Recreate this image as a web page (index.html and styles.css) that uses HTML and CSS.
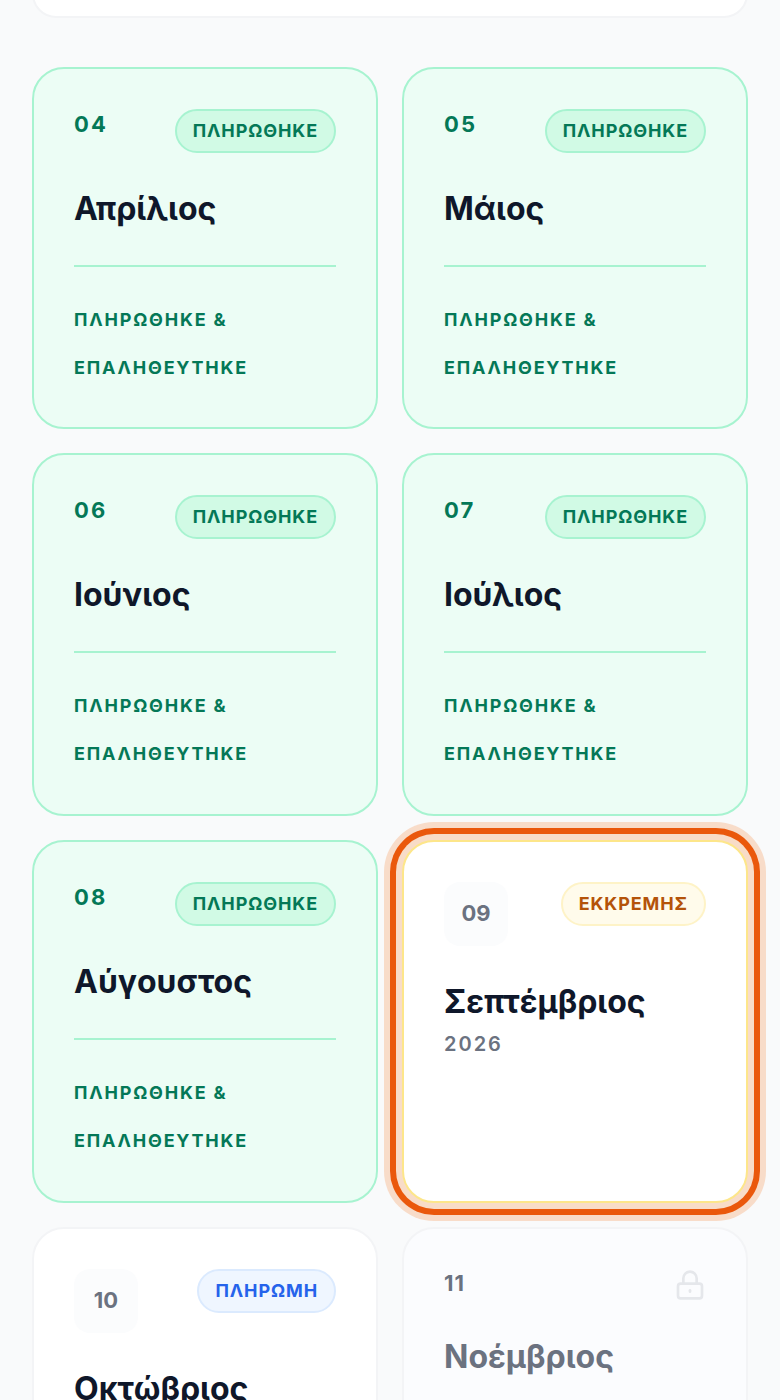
FILE: index.html
```html
<!DOCTYPE html>
<html lang="el">
<head>
<meta charset="utf-8">
<title>Πληρωμές</title>
<link rel="stylesheet" href="styles.css">
</head>
<body>
<div class="summary"></div>
<main class="grid">
  <article class="card paid">
    <div class="head"><span class="num">04</span><span class="badge b-paid">ΠΛΗΡΩΘΗΚΕ</span></div>
    <h2 class="title">Απρίλιος</h2>
    <p class="note">ΠΛΗΡΩΘΗΚΕ &amp; ΕΠΑΛΗΘΕΥΤΗΚΕ</p>
  </article>
  <article class="card paid">
    <div class="head"><span class="num">05</span><span class="badge b-paid">ΠΛΗΡΩΘΗΚΕ</span></div>
    <h2 class="title">Μάιος</h2>
    <p class="note">ΠΛΗΡΩΘΗΚΕ &amp; ΕΠΑΛΗΘΕΥΤΗΚΕ</p>
  </article>
  <article class="card paid">
    <div class="head"><span class="num">06</span><span class="badge b-paid">ΠΛΗΡΩΘΗΚΕ</span></div>
    <h2 class="title">Ιούνιος</h2>
    <p class="note">ΠΛΗΡΩΘΗΚΕ &amp; ΕΠΑΛΗΘΕΥΤΗΚΕ</p>
  </article>
  <article class="card paid">
    <div class="head"><span class="num">07</span><span class="badge b-paid">ΠΛΗΡΩΘΗΚΕ</span></div>
    <h2 class="title">Ιούλιος</h2>
    <p class="note">ΠΛΗΡΩΘΗΚΕ &amp; ΕΠΑΛΗΘΕΥΤΗΚΕ</p>
  </article>
  <article class="card paid">
    <div class="head"><span class="num">08</span><span class="badge b-paid">ΠΛΗΡΩΘΗΚΕ</span></div>
    <h2 class="title">Αύγουστος</h2>
    <p class="note">ΠΛΗΡΩΘΗΚΕ &amp; ΕΠΑΛΗΘΕΥΤΗΚΕ</p>
  </article>
  <article class="card current">
    <div class="head"><span class="chip">09</span><span class="badge b-pending">ΕΚΚΡΕΜΗΣ</span></div>
    <h2 class="title">Σεπτέμβριος</h2>
    <p class="year">2026</p>
  </article>
  <article class="card open">
    <div class="head"><span class="chip">10</span><span class="badge b-pay">ΠΛΗΡΩΜΗ</span></div>
    <h2 class="title">Οκτώβριος</h2>
  </article>
  <article class="card locked">
    <div class="head"><span class="num-locked">11</span>
      <svg class="lock" viewBox="0 0 24 24" fill="none" stroke="currentColor" stroke-width="2" stroke-linecap="round" stroke-linejoin="round"><rect x="3" y="11" width="18" height="11" rx="2"/><path d="M7 11V7a5 5 0 0 1 10 0v4"/><path d="M12 16v1"/></svg>
    </div>
    <h2 class="title">Νοέμβριος</h2>
  </article>
</main>
</body>
</html>
```
FILE: styles.css
```css
* { box-sizing: border-box; }
html, body { margin: 0; height: 1400px; overflow: hidden; }
body {
  background: #f9fafb;
  font-family: Inter, "Noto Sans", sans-serif;
  padding: 0 32px;
}
.summary {
  height: 48px;
  margin-top: -30px;
  margin-bottom: 48.67px;
  background: #fff;
  border: 2px solid #f3f4f6;
  border-radius: 32px;
}
.grid {
  display: grid;
  grid-template-columns: 346px 346px;
  grid-auto-rows: 362.67px;
  gap: 24px;
}
.card {
  border: 2px solid;
  border-radius: 32px;
  padding: 40px;
}
.paid { background: #ecfdf5; border-color: #a7f3d0; }
.current {
  background: #fff;
  border-color: #fde68a;
  box-shadow: 0 0 0 6px #f8dcc8, 0 0 0 12px #ea580c, 0 0 0 18px #f8dcc9;
}
.open { background: #fff; border-color: #f3f4f6; }
.locked { background: #fbfcfe; border-color: #f3f4f6; }
.head {
  display: flex;
  justify-content: space-between;
  align-items: flex-start;
}
.num {
  font-size: 22px;
  line-height: 30px;
  font-weight: 700;
  letter-spacing: 2.2px;
  color: #047857;
}
.num-locked {
  font-size: 22px;
  line-height: 28px;
  font-weight: 700;
  letter-spacing: 1.1px;
  color: #6b7280;
}
.chip {
  width: 64px;
  height: 64px;
  padding-bottom: 2px;
  border-radius: 16px;
  background: #fbfcfd;
  color: #6b7280;
  font-size: 22px;
  font-weight: 700;
  display: flex;
  align-items: center;
  justify-content: center;
}
.badge {
  height: 44px;
  padding: 0 16px;
  border: 2px solid;
  border-radius: 22px;
  font-size: 18px;
  font-weight: 700;
  letter-spacing: 0.9px;
  line-height: 40px;
}
.b-paid { background: #d1fae5; border-color: #a7f3d0; color: #047857; }
.b-pending { background: #fffbeb; border-color: #fef3c7; color: #b45309; }
.b-pay { background: #eff6ff; border-color: #dbeafe; color: #2563eb; }
.title {
  margin: 32px 0 0;
  font-size: 32px;
  line-height: 48px;
  font-weight: 700;
  color: #0f172a;
}
.locked .title { color: #6b7280; }
.note {
  margin: 32px 0 0;
  padding-top: 29px;
  border-top: 2px solid #a7f3d0;
  font-size: 18px;
  line-height: 48px;
  font-weight: 700;
  letter-spacing: 1.8px;
  color: #047857;
}
.year {
  margin: 3px 0 0;
  font-size: 20px;
  line-height: 30px;
  font-weight: 600;
  letter-spacing: 2px;
  color: #6b7280;
}
.lock { width: 32px; height: 32px; color: #e5e7eb; }
```
